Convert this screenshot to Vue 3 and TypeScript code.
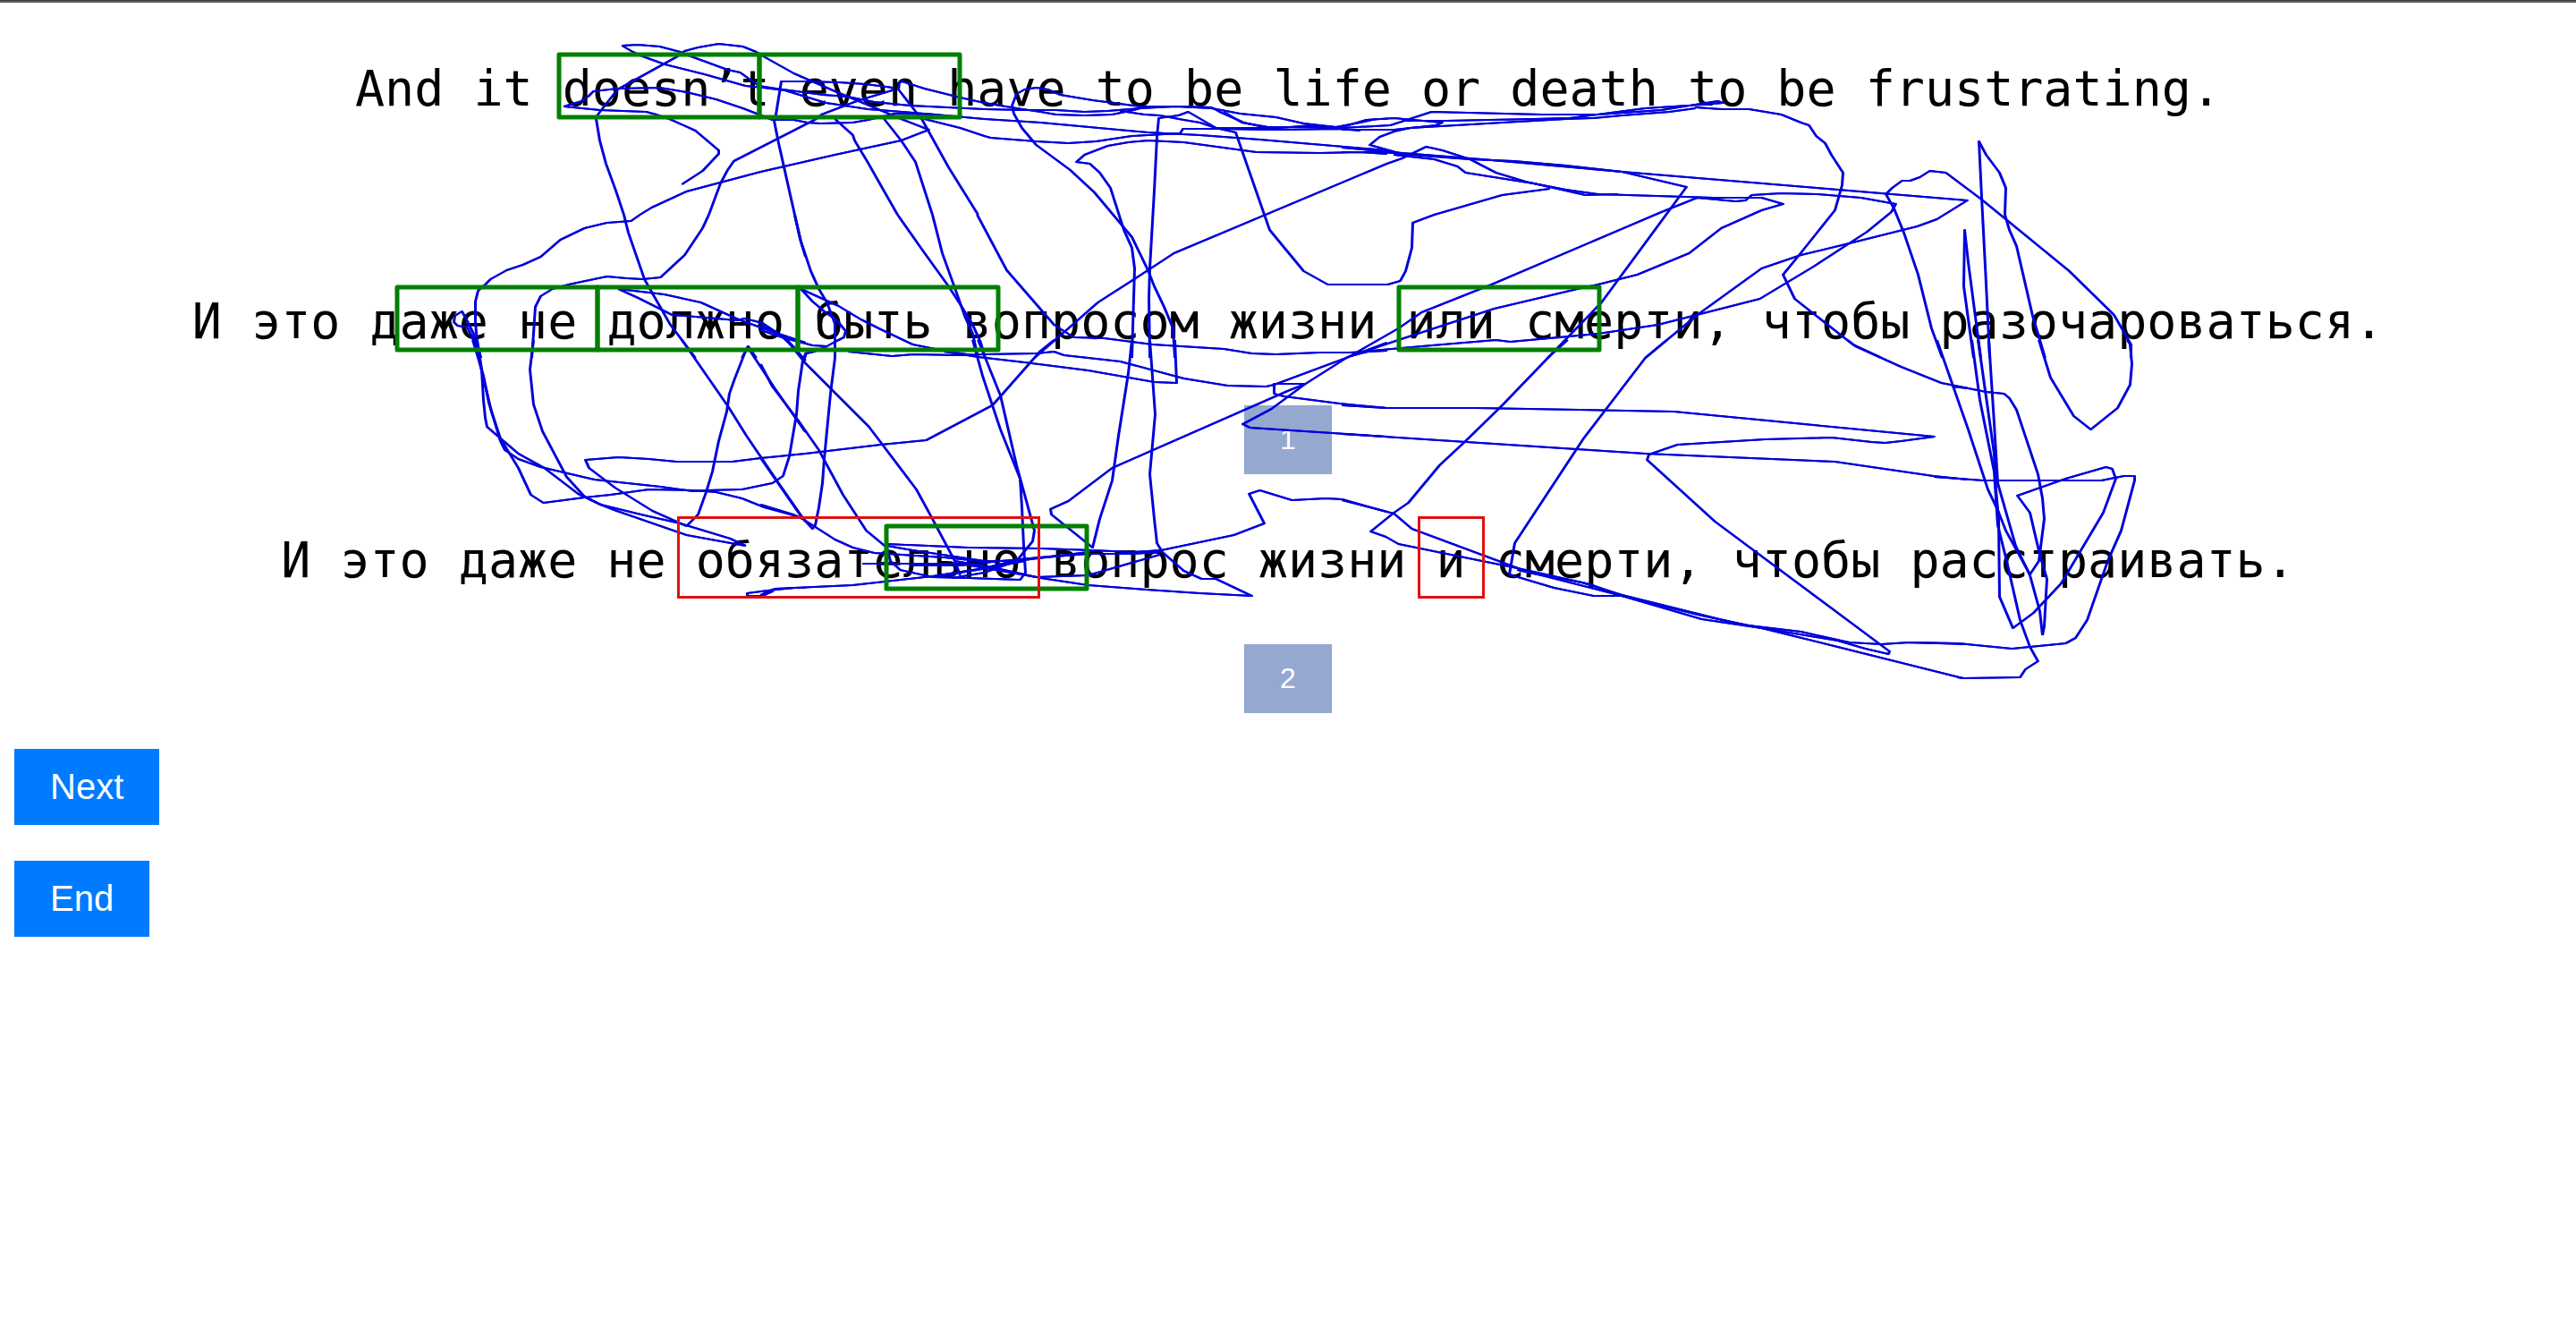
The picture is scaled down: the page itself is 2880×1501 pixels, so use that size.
<script setup lang="ts">
interface Tile {
  x: number
  y: number
  scaleX: number
  strokes: string[]
}

interface Region {
  x: number
  y: number
}

interface Piece {
  text: string
  marked?: boolean
}

const source = 'And it doesn’t even have to be life or death to be frustrating.'

const candidates: { id: number; pieces: Piece[] }[] = [
  {
    id: 1,
    pieces: [{ text: 'И это даже не должно быть вопросом жизни или смерти, чтобы разочароваться.' }],
  },
  {
    id: 2,
    pieces: [
      { text: 'И это даже не ' },
      { text: 'обязательно', marked: true },
      { text: ' вопрос жизни ' },
      { text: 'и', marked: true },
      { text: ' смерти, чтобы расстраивать.' },
    ],
  },
]

const regionWidth = 224
const regionHeight = 70
const regions: Region[] = [
  { x: 625, y: 61 },
  { x: 849, y: 61 },
  { x: 444, y: 321 },
  { x: 668, y: 321 },
  { x: 892, y: 321 },
  { x: 1564, y: 321 },
  { x: 991, y: 588 },
]

// Gaze samples are recorded per tile: each tile has its own origin on the
// canvas and its own horizontal resolution, three units per pixel vertically.
const wide = 56 / 25
const unitsY = 3

const tiles: Tile[] = [
  {
    x: 600, y: 20, scaleX: 3,
    strokes: [
      '286,93 335,90 410,95 480,113 515,130 640,173 680,183 745,228 800,238 960,257 1040,265 1130,282 1250,294 1500,305',
      '286,93 320,113 355,130 430,155 560,190 700,227 760,235 830,242 970,285 1110,305 1335,323 1500,338',
      '292,660 265,580 230,490 210,410 197,340 205,325 235,285 270,240 470,130 495,112 540,98 610,88 690,95 735,115 760,128 860,187 910,208 1000,245 1180,322 1220,340 1315,375 1220,410 1000,460 750,515 500,582 385,635 345,660',
      '90,296 150,280 175,262 190,246 270,238 410,233 500,248 600,272 690,303 745,325 790,342 860,342 905,352 950,355 1060,350 1110,342 1200,322 1335,323',
      '90,296 210,310 365,315 400,323 445,340 530,378 610,445 610,455 555,513 485,557',
      '865,660 810,420 795,345 800,325 820,212 890,212 1010,217 1100,222 1195,234 1190,243 1080,275 955,325 935,340 660,480 640,510 615,555 575,660',
      '1500,285 1420,267 1300,238 1225,212 1215,215 1213,240 1275,320 1290,340 1380,500 1478,660',
      '1000,340 1060,393 1065,410 1110,485 1160,575 1208,660',
      '1165,340 1220,410 1270,483 1325,660',
      '1300,340 1420,370 1500,397',
    ],
  },
  {
    x: 200, y: 0, scaleX: wide,
    strokes: [
      '1114,720 1125,780 1165,935 1185,985 1230,1090 1293,1200',
      '1154,720 1132,740 1070,747 1015,765 955,805 905,860 860,888 820,907 780,935 765,955 748,975 742,1010 742,1080 745,1150 755,1200',
      '1325,720 1310,765 1265,855 1205,930 1160,937 1120,932 1070,928 975,955 935,970 905,992 892,1030 886,1120 883,1200',
      '755,1200 738,1120 720,1070 708,1045 690,1058 687,1080 697,1093 722,1098 738,1140 750,1200',
      '1542,720 1555,800 1568,860',
      '1100,968 1215,988 1305,1015 1400,1072 1480,1110 1568,1150',
      '1100,968 1150,1000 1235,1055 1320,1065 1395,1075 1415,1068 1460,1082 1500,1120 1540,1165 1560,1200',
      '1410,1200 1425,1160 1445,1200',
    ],
  },
  {
    x: 200, y: 380, scaleX: wide,
    strokes: [
      '735,0 750,70 762,120 775,210 790,280 805,340 815,370 850,400 905,427 1040,468 1205,493 1285,507 1320,505 1410,500 1485,480 1513,455 1528,390 1545,250 1550,170 1562,70 1568,50',
      '745,0 757,100 762,200 765,260 770,290 850,380 915,430 1000,515 1055,553 1095,573 1270,655 1418,690',
      '740,0 755,90 782,240 805,330 850,430 880,520 912,545 1015,527 1080,520 1175,500 1290,505 1345,510 1410,530 1465,560 1540,587',
      '886,0 878,100 886,215 910,305 970,460 1015,525 1055,553 1155,585 1255,615 1380,665 1418,690',
      '1456,397 1385,408 1245,408 1175,400 1100,392 1018,403 1025,428 1090,495 1185,573 1270,625',
      '1425,20 1415,45 1390,130 1378,180 1370,240 1350,340 1335,440 1320,510 1300,585 1270,625',
      '1430,35 1490,160 1568,310',
      '1258,0 1375,225 1420,320 1500,480 1568,610',
      '1520,0 1568,70',
      '1490,840 1460,857 1423,857 1423,850 1475,840 1540,830 1568,830',
    ],
  },
  {
    x: 850, y: 0, scaleX: wide,
    strokes: [
      '543,720 615,905 735,1090 785,1130 860,1135 980,1155 1160,1170 1230,1185 1290,1188 1400,1183 1475,1183 1568,1175',
      '342,720 400,830 470,960 500,1020 530,1090 550,1150 562,1200',
      '429,720 455,850 495,1000 510,1060 530,1120 545,1200',
      '86,720 100,810 125,910 145,970 165,1015 187,1085 187,1200',
      '685,1200 770,1100 845,1015 970,905 1035,848 1568,550',
      '1270,430 1210,412 1150,375 1130,360 1060,358 950,358 830,335 750,318 720,300 690,295 660,300 640,315 630,355 635,380 655,430 690,485 775,570 835,645 930,795 970,905 985,960 1010,1030 1033,1100 1038,1200',
      '1568,515 1500,510 1400,513 1240,510 1060,478 970,472 920,477 870,490 810,520 790,543 825,548 850,580 875,630 910,770 930,830 937,900 935,1000 930,1200',
      '975,1200 973,1000 975,900 985,640 992,460 997,397 1045,388 1070,375 1140,430 1190,443 1275,770 1360,910 1420,953 1505,955 1568,953',
      '560,345 640,362 700,375 740,385 810,387 880,383 935,368 950,362',
      '560,365 660,370 740,370 810,376 870,372 950,362 1040,358 1130,362 1200,380 1290,393 1360,415 1440,425 1500,412 1540,400 1568,398',
      '560,398 700,412 970,443 1100,452 1250,468 1568,505',
      '560,455 575,463 690,475 770,480 840,475 930,455 1050,447 1058,433 1140,433 1290,435 1450,433 1500,438',
      '900,372 960,385 1000,387 1060,402 1100,412 1140,430 1300,430 1380,420 1460,430',
      '1160,375 1205,410 1270,425 1370,425 1456,430',
      '100,970 130,1010 160,1045 190,1075 213,1110 208,1130 185,1145 165,1160 130,1158 60,1135 0,1108',
      '100,970 195,1025 250,1070 300,1105 380,1155 460,1175 545,1195',
      '0,1090 60,1130 105,1200',
      '110,1200 115,1185 135,1178 165,1162',
    ],
  },
  {
    x: 850, y: 380, scaleX: wide,
    strokes: [
      '0,80 30,155 95,270 145,370 205,520 265,640 315,695 325,740 350,770 430,795 520,797 650,805 663,780 658,690 655,560 650,465 600,300 555,120 530,0',
      '0,395 100,590 130,632 137,620 145,560 155,480 160,400 175,180 187,60 187,0',
      '65,0 110,75 270,290 390,500 430,600 485,740 500,790',
      '545,0 600,185 640,420 665,540 685,640 680,675 640,740 560,780 480,797',
      '0,553 80,585 105,600 185,670 230,695 285,715 460,730 570,745',
      '220,40 330,53 380,48 500,50 560,47 690,45 735,38 760,52 900,72 1060,128 1170,152 1265,157 1285,150 1568,10',
      '460,40 545,58 660,75 820,103 985,140 1042,143 1038,0',
      '930,0 920,110 895,320 880,470 850,600 830,695 728,585 725,568 770,540 880,430 1320,170 1365,148 1285,147 1285,180 1310,188 1450,213 1568,228',
      '1475,55 1365,148 1280,230 1208,283 1225,295 1568,325',
      '735,0 700,35 600,190 580,218 415,335 300,352 112,380 0,395',
      '975,0 988,250 975,450 985,600 993,680 1005,710 1060,775 1105,800 1140,800 1230,857 1100,848 965,838 820,823 700,797 590,765 485,740',
      '315,685 520,697 700,700 830,705 930,712 1005,705',
      '315,690 380,705 560,740 640,740 820,712',
      '255,750 330,750 500,750 590,770 690,795 820,790 1000,720',
      '380,757 500,757 600,740 820,718 930,718 1000,710',
      '0,855 35,835 230,823 430,793 560,765 650,735 820,715',
      '430,795 570,765 660,740',
      '993,708 1185,655 1260,615 1222,515 1250,505 1330,537 1415,532 1455,535 1568,575',
      '108,75 112,45 130,40',
    ],
  },
  {
    x: 1500, y: 0, scaleX: wide,
    strokes: [
      '0,425 60,402 130,395 250,412 235,420 130,435 0,435',
      '0,430 120,420 225,375 500,385 640,385 800,370 855,357 940,340 955,345 900,350 760,362 570,395 480,400 260,405 150,405',
      '885,360 950,366 1020,365 1100,385 1150,410 1170,420 1188,455 1210,480 1225,520 1255,580 1253,620 1235,705 1190,780 1145,855 1105,920 1133,1003 1280,1155 1350,1200',
      '885,362 820,375 700,388 630,397 560,398 400,410 170,430 130,440 95,460 70,487 150,515',
      '0,495 150,513 350,535 700,575 1565,673 1490,735 1440,760 1270,815 1150,855 1050,900 890,1055 760,1200',
      '0,510 100,510 200,522 320,535 430,540 560,555 700,575 863,627 650,1015 515,1200',
      '112,550 150,530 210,492 250,503 320,535 385,580 460,610 540,632 610,655 690,652',
      '130,520 230,535 290,557 310,580 480,615 560,637 640,650 860,660 930,662 1050,662 1105,683 1050,705 950,765 870,848 740,922 640,953 590,968 380,1035 140,1140 20,1195',
      '20,1195 140,1100 200,1048 375,953 800,710 890,662 985,675 1010,673 1025,655 1100,648 1190,650 1300,662 1387,683 1375,710 1315,778 1180,893 1045,1003 790,1090 640,1120 420,1147 385,1140 200,1160 75,1175 20,1195',
      '0,953 115,953 145,943 160,910 175,830 178,747 230,720 400,655 520,633',
    ],
  },
  {
    x: 1500, y: 380, scaleX: wide,
    strokes: [
      '565,0 520,55 400,220 310,340 245,420 165,545 130,580 72,643 110,660 140,683 250,715 440,765 620,820 700,857 900,935 1050,965 1240,1030 1555,1135',
      '1265,0 1285,20 1400,90 1500,145 1568,162',
      '812,0 760,60 605,330 432,680 418,785 470,808 530,832 630,857 700,857',
      '0,218 110,227 335,228 830,240 1483,325 1400,340 1360,345 1325,343 1225,328 1060,333 840,352 768,385 763,403 935,610 1370,1045 1368,1053 1310,1035 1240,1008 1040,962 900,925 700,857 500,790 440,770',
      '0,315 760,382 1235,408 1480,457 1568,467',
      '0,537 130,583 175,632 350,720 470,780 600,812 700,855 1000,955 1150,978 1270,1013 1350,1020 1420,1013 1568,1020',
    ],
  },
  {
    x: 2050, y: 0, scaleX: wide,
    strokes: [
      '743,1200 743,1155 700,1055 590,910 430,735 370,670 280,578 240,572 215,595 190,605 170,607 145,630 130,650 150,700 175,780 210,920 245,1100 270,1200',
      '528,1200 497,1060 458,825 440,770 428,720 430,630 415,580 380,520 363,473 370,660 380,950 390,1200',
      '350,1200 325,960 328,770 335,880 368,1200',
    ],
  },
  {
    x: 2050, y: 380, scaleX: wide,
    strokes: [
      '258,0 335,300 385,500 410,570 430,640 490,785 512,740 527,600 523,530 510,450 485,350 458,235 440,195 425,180 380,175 335,162 295,155',
      '345,0 365,200 400,440 410,620 432,740 465,940 490,1030 510,1077 480,1105 467,1130 325,1135 310,1130',
      '360,0 400,380 405,500 412,600 415,860 448,965 500,915 570,815 675,580 705,465 697,432 680,427 580,465 460,522 490,580 515,720 532,800 527,960 523,990',
      '388,0 400,280 410,480 455,690 490,790 515,910 523,990',
      '513,0 543,125 600,255 642,300 710,228 742,150 747,80 742,15 735,0',
      '250,458 375,470 670,470 725,455 753,455 753,470 720,640 685,740 635,940 605,1000 580,1018 445,1035 310,1018 190,1013',
    ],
  },
]

function toPoints(tile: Tile, stroke: string): string {
  return stroke
    .split(' ')
    .map((sample) => {
      const [x, y] = sample.split(',').map(Number)
      return `${Math.round(tile.x + x / tile.scaleX)},${Math.round(tile.y + y / unitsY)}`
    })
    .join(' ')
}

const gazePaths: string[] = tiles.flatMap((tile) => tile.strokes.map((stroke) => toPoints(tile, stroke)))
</script>

<template>
  <main class="page">
    <section class="sentences">
      <p class="sentence">{{ source }}</p>
      <template v-for="candidate in candidates" :key="candidate.id">
        <p class="sentence candidate"><span
          v-for="(piece, index) in candidate.pieces"
          :key="index"
          :class="{ marked: piece.marked }"
        >{{ piece.text }}</span></p>
        <button type="button" class="choice">{{ candidate.id }}</button>
      </template>
    </section>
    <div class="actions">
      <button type="button" class="action">Next</button>
      <button type="button" class="action">End</button>
    </div>
    <svg class="gaze" width="2880" height="800" viewBox="0 0 2880 800" aria-hidden="true">
      <!-- The pen nib is wider than it is tall, so slanted strokes come out heavier. -->
      <g id="gaze-tracks">
        <polyline v-for="(points, index) in gazePaths" :key="index" class="track" :points="points" />
      </g>
      <use href="#gaze-tracks" x="1" />
      <rect
        v-for="(region, index) in regions"
        :key="index"
        class="region"
        :x="region.x"
        :y="region.y"
        :width="regionWidth"
        :height="regionHeight"
      />
    </svg>
  </main>
</template>

<style>
body {
  margin: 0;
  background: #fff;
}
</style>

<style scoped>
.page {
  position: relative;
  overflow: hidden;
  padding: 62px 16px 16px;
  border-top: 1px solid #403d3e;
  box-shadow: inset 0 2px #605d5e;
  font-family: "Liberation Sans", Arial, sans-serif;
}

.sentences {
  display: flex;
  flex-direction: column;
  align-items: center;
}

.sentence {
  margin: 0;
  font-family: "DejaVu Sans Mono", monospace;
  font-size: 55px;
  line-height: 72px;
  color: #000;
  white-space: pre;
}

.candidate {
  margin-bottom: 58px;
}

.sentence + .candidate {
  margin-top: 188px;
}

.choice + .candidate {
  margin-top: 60px;
}

.marked {
  position: relative;
}

.marked::after {
  content: "";
  position: absolute;
  z-index: 2;
  inset: -17px -21px -11px;
  border: 3px solid #e01010;
}

.choice,
.action {
  border: 0;
  padding: 20px 40px;
  font-family: inherit;
  color: #fff;
}

.choice {
  font-size: 32px;
  line-height: 37px;
  background: #95a8d0;
}

.actions {
  display: flex;
  flex-direction: column;
  align-items: flex-start;
  gap: 40px;
  margin-top: 40px;
}

.action {
  font-size: 40px;
  line-height: 45px;
  background: #007bff;
}

.gaze {
  position: absolute;
  top: -1px;
  left: 50%;
  margin-left: -1440px;
  pointer-events: none;
}

.track {
  fill: none;
  stroke: #0000dc;
  stroke-width: 2;
  stroke-linejoin: round;
}

.region {
  fill: none;
  stroke: #008000;
  stroke-width: 5;
  stroke-linejoin: round;
}
</style>
